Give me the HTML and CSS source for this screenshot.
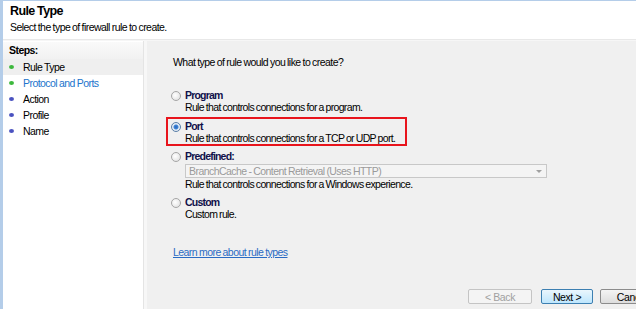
FILE: index.html
```html
<!DOCTYPE html>
<html lang="en">
<head>
    <meta charset="utf-8" />
    <title>New Inbound Rule Wizard - Rule Type</title>
    <link rel="stylesheet" href="styles.css">
</head>
<body>
    <div class="window">
        <div class="header">
            <h1>Rule Type</h1>
            <p>Select the type of firewall rule to create.</p>
        </div>

        <div class="content">
            <div class="steps">
                <div class="steps-title">Steps:</div>
                <ul>
                    <li class="done current"><span class="dot"></span>Rule Type</li>
                    <li class="done next"><span class="dot"></span>Protocol and Ports</li>
                    <li><span class="dot"></span>Action</li>
                    <li><span class="dot"></span>Profile</li>
                    <li><span class="dot"></span>Name</li>
                </ul>
            </div>

            <div class="main">
                <p class="question">What type of rule would you like to create?</p>

                <div class="option program">
                    <span class="radio"></span>
                    <div>
                        <div class="label">Program</div>
                        <div class="desc">Rule that controls connections for a program.</div>
                    </div>
                </div>

                <div class="option selected">
                    <span class="radio checked"></span>
                    <div>
                        <div class="label">Port</div>
                        <div class="desc">Rule that controls connections for a TCP or UDP port.</div>
                    </div>
                </div>

                <div class="option">
                    <span class="radio"></span>
                    <div>
                        <div class="label">Predefined:</div>
                        <div class="select">
                            <span>BranchCache - Content Retrieval (Uses HTTP)</span>
                            <span class="arrow"></span>
                        </div>
                        <div class="desc">Rule that controls connections for a Windows experience.</div>
                    </div>
                </div>

                <div class="option">
                    <span class="radio"></span>
                    <div>
                        <div class="label">Custom</div>
                        <div class="desc">Custom rule.</div>
                    </div>
                </div>

                <a href="#" class="link">Learn more about rule types</a>

                <div class="buttons">
                    <button class="button back" disabled>&lt; Back</button>
                    <button class="button default">Next &gt;</button>
                    <button class="button">Cancel</button>
                </div>
            </div>
        </div>
    </div>
</body>
</html>
```

FILE: styles.css
```css
html, body {
    margin: 0;
    padding: 0;
}
body {
    font-family: "Liberation Sans", Arial, sans-serif;
    font-size: 10.5px;
    letter-spacing: -0.55px;
    word-spacing: -0.5px;
    color: #000;
    background: #f0f0f0;
    width: 636px;
    height: 309px;
    overflow: hidden;
}
.window {
    height: 309px;
    display: flex;
    flex-direction: column;
    border-left: 3px solid #b4cde9;
    border-top: 1px solid #b4cde9;
    box-sizing: border-box;
}
.header {
    height: 39px;
    background: #fff;
    border-bottom: 1px solid #e8e8e8;
    padding-left: 7px;
    box-sizing: border-box;
}
.header h1 {
    margin: 0;
    padding-top: 2px;
    font-size: 12.5px;
    letter-spacing: -0.6px;
    font-weight: bold;
    line-height: 16px;
}
.header p {
    margin: 0;
    padding-top: 2px;
    line-height: 13px;
}
.content {
    flex: 1;
    display: flex;
    border-top: 1px solid #f6f6f6;
}
.steps {
    width: 140px;
    background: #fff;
    border-right: 1px solid #e4e4e4;
    box-shadow: 3px 0 0 #f7f7f7;
}
.steps-title {
    font-weight: bold;
    height: 17px;
    line-height: 17px;
    padding-left: 6px;
    margin-top: 1px;
    background: linear-gradient(#fafafa, #f1f1f1);
}
.steps ul {
    list-style: none;
    margin: 0;
    padding: 0;
}
.steps li {
    height: 16px;
    line-height: 16px;
    padding-left: 20px;
    position: relative;
}
.steps li.current {
    background: #efefef;
}
.steps li.next {
    color: #2274cc;
}
.dot {
    position: absolute;
    left: 6px;
    top: 6px;
    width: 5px;
    height: 4px;
    border-radius: 50%;
    background: #4a52c0;
}
.steps li.done .dot {
    background: #3cb83c;
}
.main {
    flex: 1;
    margin-left: 3px;
    padding-left: 26px;
    padding-top: 14px;
    display: flex;
    flex-direction: column;
    overflow: hidden;
}
.question {
    margin: 0 0 17px 0;
    line-height: 14px;
}
.option {
    display: flex;
    align-items: flex-start;
    gap: 4px;
    line-height: 11px;
    padding: 2px 3px 0 3px;
    margin-left: -7px;
    margin-bottom: 1px;
    width: 241px;
    box-sizing: border-box;
    border: 2px solid transparent;
}
.option.program {
    margin-bottom: 2px;
}
.option.selected {
    border-color: #e8141c;
}
.radio {
    width: 8px;
    height: 8px;
    margin-top: 1px;
    border-radius: 50%;
    border: 1px solid #a6a6a6;
    background: radial-gradient(circle at 40% 40%, #fff, #dcdcdc);
    flex-shrink: 0;
}
.radio.checked {
    border-color: #5a7fa8;
    background: radial-gradient(circle, #2a63b8 0, #3f86d8 2px, #e8eef6 3px, #d4dce6);
}
.label {
    font-weight: bold;
    letter-spacing: -0.8px;
    color: #10104a;
}
.desc {
    white-space: nowrap;
    margin-top: 1px;
    letter-spacing: -0.65px;
}
.select {
    width: 357px;
    height: 12px;
    margin: 2px 0 0 0;
    border: 1px solid #c8c8c8;
    background: #f4f4f4;
    color: #9a9a9a;
    display: flex;
    align-items: center;
    justify-content: space-between;
    padding-left: 3px;
    white-space: nowrap;
}
.arrow {
    width: 0;
    height: 0;
    margin-right: 4px;
    border-left: 3px solid transparent;
    border-right: 3px solid transparent;
    border-top: 3px solid #a0a0a0;
}
.link {
    margin-top: 23px;
    color: #2a6bc4;
    align-self: flex-start;
    line-height: 12px;
}
.buttons {
    margin-top: auto;
    margin-bottom: 5px;
    padding-left: 295px;
    display: flex;
    gap: 7px;
}
.button {
    font-family: "Liberation Sans", Arial, sans-serif;
    font-size: 10.5px;
    letter-spacing: -0.4px;
    height: 15px;
    padding: 0;
    border: 1px solid #8c8c8c;
    border-radius: 2px;
    background: linear-gradient(#f4f4f4, #dddddd);
    color: #000;
    flex-shrink: 0;
    width: 64px;
}
.button.back {
    margin-right: 2px;
}
.button[disabled] {
    color: #a0a0a0;
    border-color: #c4c4c4;
    background: #f4f4f4;
}
.button.default {
    width: 52px;
    border-color: #3c7fb1;
    background: linear-gradient(#eaf6fd, #bee6fd);
}
```
